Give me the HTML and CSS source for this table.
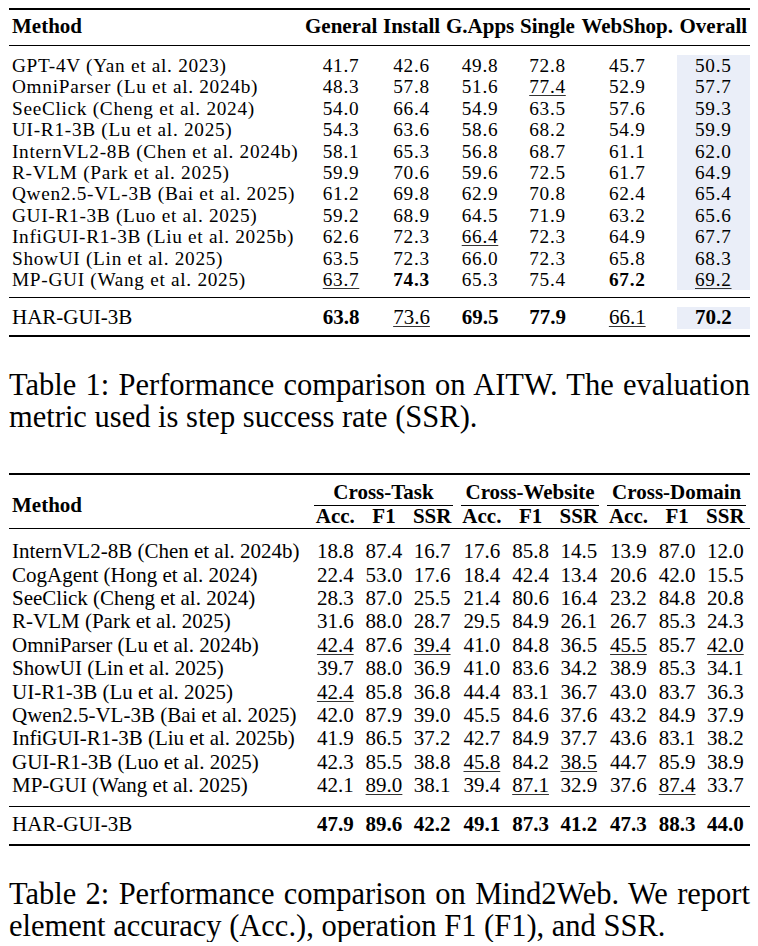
FILE: index.html
```html
<!DOCTYPE html>
<html>
<head>
<meta charset="utf-8">
<link rel="stylesheet" href="styles.css">
</head>
<body>
<table class="tbl t1">
  <colgroup>
    <col class="c1-m"><col class="c1-gen"><col class="c1-ins"><col class="c1-gap"><col class="c1-sin"><col class="c1-web"><col class="c1-ov">
  </colgroup>
  <thead>
    <tr><th class="m">Method</th><th>General</th><th>Install</th><th>G.Apps</th><th>Single</th><th>WebShop.</th><th>Overall</th></tr>
  </thead>
  <tbody>
    <tr class="gap g-top"><td colspan="7"></td></tr>
    <tr class="d"><td class="m">GPT-4V (Yan et al. 2023)</td><td>41.7</td><td>42.6</td><td>49.8</td><td>72.8</td><td>45.7</td><td class="ov">50.5</td></tr>
    <tr class="d"><td class="m">OmniParser (Lu et al. 2024b)</td><td>48.3</td><td>57.8</td><td>51.6</td><td><span class="u">77.4</span></td><td>52.9</td><td class="ov">57.7</td></tr>
    <tr class="d"><td class="m">SeeClick (Cheng et al. 2024)</td><td>54.0</td><td>66.4</td><td>54.9</td><td>63.5</td><td>57.6</td><td class="ov">59.3</td></tr>
    <tr class="d"><td class="m">UI-R1-3B (Lu et al. 2025)</td><td>54.3</td><td>63.6</td><td>58.6</td><td>68.2</td><td>54.9</td><td class="ov">59.9</td></tr>
    <tr class="d"><td class="m">InternVL2-8B (Chen et al. 2024b)</td><td>58.1</td><td>65.3</td><td>56.8</td><td>68.7</td><td>61.1</td><td class="ov">62.0</td></tr>
    <tr class="d"><td class="m">R-VLM (Park et al. 2025)</td><td>59.9</td><td>70.6</td><td>59.6</td><td>72.5</td><td>61.7</td><td class="ov">64.9</td></tr>
    <tr class="d"><td class="m">Qwen2.5-VL-3B (Bai et al. 2025)</td><td>61.2</td><td>69.8</td><td>62.9</td><td>70.8</td><td>62.4</td><td class="ov">65.4</td></tr>
    <tr class="d"><td class="m">GUI-R1-3B (Luo et al. 2025)</td><td>59.2</td><td>68.9</td><td>64.5</td><td>71.9</td><td>63.2</td><td class="ov">65.6</td></tr>
    <tr class="d"><td class="m">InfiGUI-R1-3B (Liu et al. 2025b)</td><td>62.6</td><td>72.3</td><td><span class="u">66.4</span></td><td>72.3</td><td>64.9</td><td class="ov">67.7</td></tr>
    <tr class="d"><td class="m">ShowUI (Lin et al. 2025)</td><td>63.5</td><td>72.3</td><td>66.0</td><td>72.3</td><td>65.8</td><td class="ov">68.3</td></tr>
    <tr class="d"><td class="m">MP-GUI (Wang et al. 2025)</td><td><span class="u">63.7</span></td><td class="b">74.3</td><td>65.3</td><td>75.4</td><td class="b">67.2</td><td class="ov"><span class="u">69.2</span></td></tr>
    <tr class="gap g-mid1 rule"><td colspan="7"></td></tr>
    <tr class="gap g-mid2"><td colspan="7"></td></tr>
    <tr><td class="m">HAR-GUI-3B</td><td class="b">63.8</td><td><span class="u">73.6</span></td><td class="b">69.5</td><td class="b">77.9</td><td><span class="u">66.1</span></td><td class="ov b">70.2</td></tr>
    <tr class="gap g-bot"><td colspan="7"></td></tr>
  </tbody>
</table>

<p class="cap">Table 1: Performance comparison on AITW. The evaluation metric used is step success rate (SSR).</p>

<table class="tbl t2">
  <colgroup>
    <col class="c2-m">
    <col class="c2-acc"><col class="c2-f1"><col class="c2-ssr">
    <col class="c2-acc"><col class="c2-f1"><col class="c2-ssr">
    <col class="c2-acc"><col class="c2-f1"><col class="c2-ssr">
  </colgroup>
  <thead>
    <tr class="h1">
      <th class="m mh" rowspan="2">Method</th>
      <th class="grp" colspan="3"><div class="cm">Cross-Task</div></th>
      <th class="grp" colspan="3"><div class="cm">Cross-Website</div></th>
      <th class="grp" colspan="3"><div class="cm">Cross-Domain</div></th>
    </tr>
    <tr class="h2">
      <th>Acc.</th><th>F1</th><th>SSR</th>
      <th>Acc.</th><th>F1</th><th>SSR</th>
      <th>Acc.</th><th>F1</th><th>SSR</th>
    </tr>
  </thead>
  <tbody>
    <tr class="gap g2-top"><td colspan="10"></td></tr>
    <tr><td class="m">InternVL2-8B (Chen et al. 2024b)</td><td>18.8</td><td>87.4</td><td>16.7</td><td>17.6</td><td>85.8</td><td>14.5</td><td>13.9</td><td>87.0</td><td>12.0</td></tr>
    <tr><td class="m">CogAgent (Hong et al. 2024)</td><td>22.4</td><td>53.0</td><td>17.6</td><td>18.4</td><td>42.4</td><td>13.4</td><td>20.6</td><td>42.0</td><td>15.5</td></tr>
    <tr><td class="m">SeeClick (Cheng et al. 2024)</td><td>28.3</td><td>87.0</td><td>25.5</td><td>21.4</td><td>80.6</td><td>16.4</td><td>23.2</td><td>84.8</td><td>20.8</td></tr>
    <tr><td class="m">R-VLM (Park et al. 2025)</td><td>31.6</td><td>88.0</td><td>28.7</td><td>29.5</td><td>84.9</td><td>26.1</td><td>26.7</td><td>85.3</td><td>24.3</td></tr>
    <tr><td class="m">OmniParser (Lu et al. 2024b)</td><td><span class="u">42.4</span></td><td>87.6</td><td><span class="u">39.4</span></td><td>41.0</td><td>84.8</td><td>36.5</td><td><span class="u">45.5</span></td><td>85.7</td><td><span class="u">42.0</span></td></tr>
    <tr><td class="m">ShowUI (Lin et al. 2025)</td><td>39.7</td><td>88.0</td><td>36.9</td><td>41.0</td><td>83.6</td><td>34.2</td><td>38.9</td><td>85.3</td><td>34.1</td></tr>
    <tr><td class="m">UI-R1-3B (Lu et al. 2025)</td><td><span class="u">42.4</span></td><td>85.8</td><td>36.8</td><td>44.4</td><td>83.1</td><td>36.7</td><td>43.0</td><td>83.7</td><td>36.3</td></tr>
    <tr><td class="m">Qwen2.5-VL-3B (Bai et al. 2025)</td><td>42.0</td><td>87.9</td><td>39.0</td><td>45.5</td><td>84.6</td><td>37.6</td><td>43.2</td><td>84.9</td><td>37.9</td></tr>
    <tr><td class="m">InfiGUI-R1-3B (Liu et al. 2025b)</td><td>41.9</td><td>86.5</td><td>37.2</td><td>42.7</td><td>84.9</td><td>37.7</td><td>43.6</td><td>83.1</td><td>38.2</td></tr>
    <tr><td class="m">GUI-R1-3B (Luo et al. 2025)</td><td>42.3</td><td>85.5</td><td>38.8</td><td><span class="u">45.8</span></td><td>84.2</td><td><span class="u">38.5</span></td><td>44.7</td><td>85.9</td><td>38.9</td></tr>
    <tr><td class="m">MP-GUI (Wang et al. 2025)</td><td>42.1</td><td><span class="u">89.0</span></td><td>38.1</td><td>39.4</td><td><span class="u">87.1</span></td><td>32.9</td><td>37.6</td><td><span class="u">87.4</span></td><td>33.7</td></tr>
    <tr class="gap g2-mid1 rule"><td colspan="10"></td></tr>
    <tr class="gap g2-mid2"><td colspan="10"></td></tr>
    <tr class="b"><td class="m nb">HAR-GUI-3B</td><td>47.9</td><td>89.6</td><td>42.2</td><td>49.1</td><td>87.3</td><td>41.2</td><td>47.3</td><td>88.3</td><td>44.0</td></tr>
    <tr class="gap g2-bot"><td colspan="10"></td></tr>
  </tbody>
</table>

<p class="cap">Table 2: Performance comparison on Mind2Web. We report element accuracy (Acc.), operation F1 (F1), and SSR.</p>
</body>
</html>
```

FILE: styles.css
```css
html, body {
  margin: 0;
  background: #fff;
}

body {
  padding: 8px 8px 0 9px;
  font-family: "Liberation Serif", "Times New Roman", serif;
  color: #000;
}

.tbl {
  border-collapse: separate;
  border-spacing: 0;
  table-layout: fixed;
  width: 741px;
  font-size: 21px;
  border-top: 2px solid #000;
  border-bottom: 2px solid #000;
}

.tbl th,
.tbl td {
  padding: 0 3px;
  white-space: nowrap;
  text-align: center;
  font-weight: normal;
}

.tbl th {
  font-weight: bold;
}

.tbl .m {
  text-align: left;
}

.tbl .b,
.tbl .b td {
  font-weight: bold;
}

.tbl .b .nb {
  font-weight: normal;
}

.gap td {
  padding: 0;
  font-size: 0;
  line-height: 0;
}

.rule td {
  border-bottom: 1px solid #000;
}

.u {
  text-decoration: underline;
  text-decoration-thickness: 1px;
  text-underline-offset: 2px;
  text-decoration-color: #333;
}

/* ---- Table 1 ---- */
.c1-m { width: 293px; }
.c1-gen { width: 78px; }
.c1-ins { width: 63px; }
.c1-gap { width: 74px; }
.c1-sin { width: 61px; }
.c1-web { width: 98.5px; }
.c1-ov { width: 73.5px; }

.t1 th {
  line-height: 21.4px;
  padding-top: 6px;
  padding-bottom: 7.5px;
  border-bottom: 1px solid #000;
}

.t1 td {
  line-height: 21.4px;
  height: 21.4px;
}

.t1 .d td {
  font-size: 19.3px;
  letter-spacing: 0.7px;
}

.t1 td.ov {
  background: #eaeef8;
}

.t1 .g-top td { height: 9px; }
.t1 .g-mid1 td { height: 7px; }
.t1 .g-mid2 td { height: 9px; }
.t1 .g-bot td { height: 6.6px; }

/* ---- Captions ---- */
.cap {
  width: 741px;
  margin: 33px 0 0;
  font-size: 30.5px;
  line-height: 31.5px;
  text-align: justify;
}

/* ---- Table 2 ---- */
.t2 {
  margin-top: 40px;
}

.c2-m { width: 300px; }
.c2-acc { width: 50px; }
.c2-f1 { width: 47px; }
.c2-ssr { width: 49px; }

.t2 th {
  line-height: 21.4px;
}

.t2 .mh {
  padding-top: 7px;
  vertical-align: middle;
  border-bottom: 1px solid #000;
}

.t2 .grp {
  padding: 7px 0 0;
}

.t2 .cm {
  margin: 0 4px;
  padding-bottom: 1px;
  border-bottom: 1px solid #000;
}

.t2 .h2 th {
  padding-bottom: 1px;
  border-bottom: 1px solid #000;
}

.t2 td {
  line-height: 23.4px;
  height: 23.4px;
}

.t2 .g2-top td { height: 11px; }
.t2 .g2-mid1 td { height: 8px; }
.t2 .g2-mid2 td { height: 6.6px; }
.t2 .g2-bot td { height: 7.6px; }
```
